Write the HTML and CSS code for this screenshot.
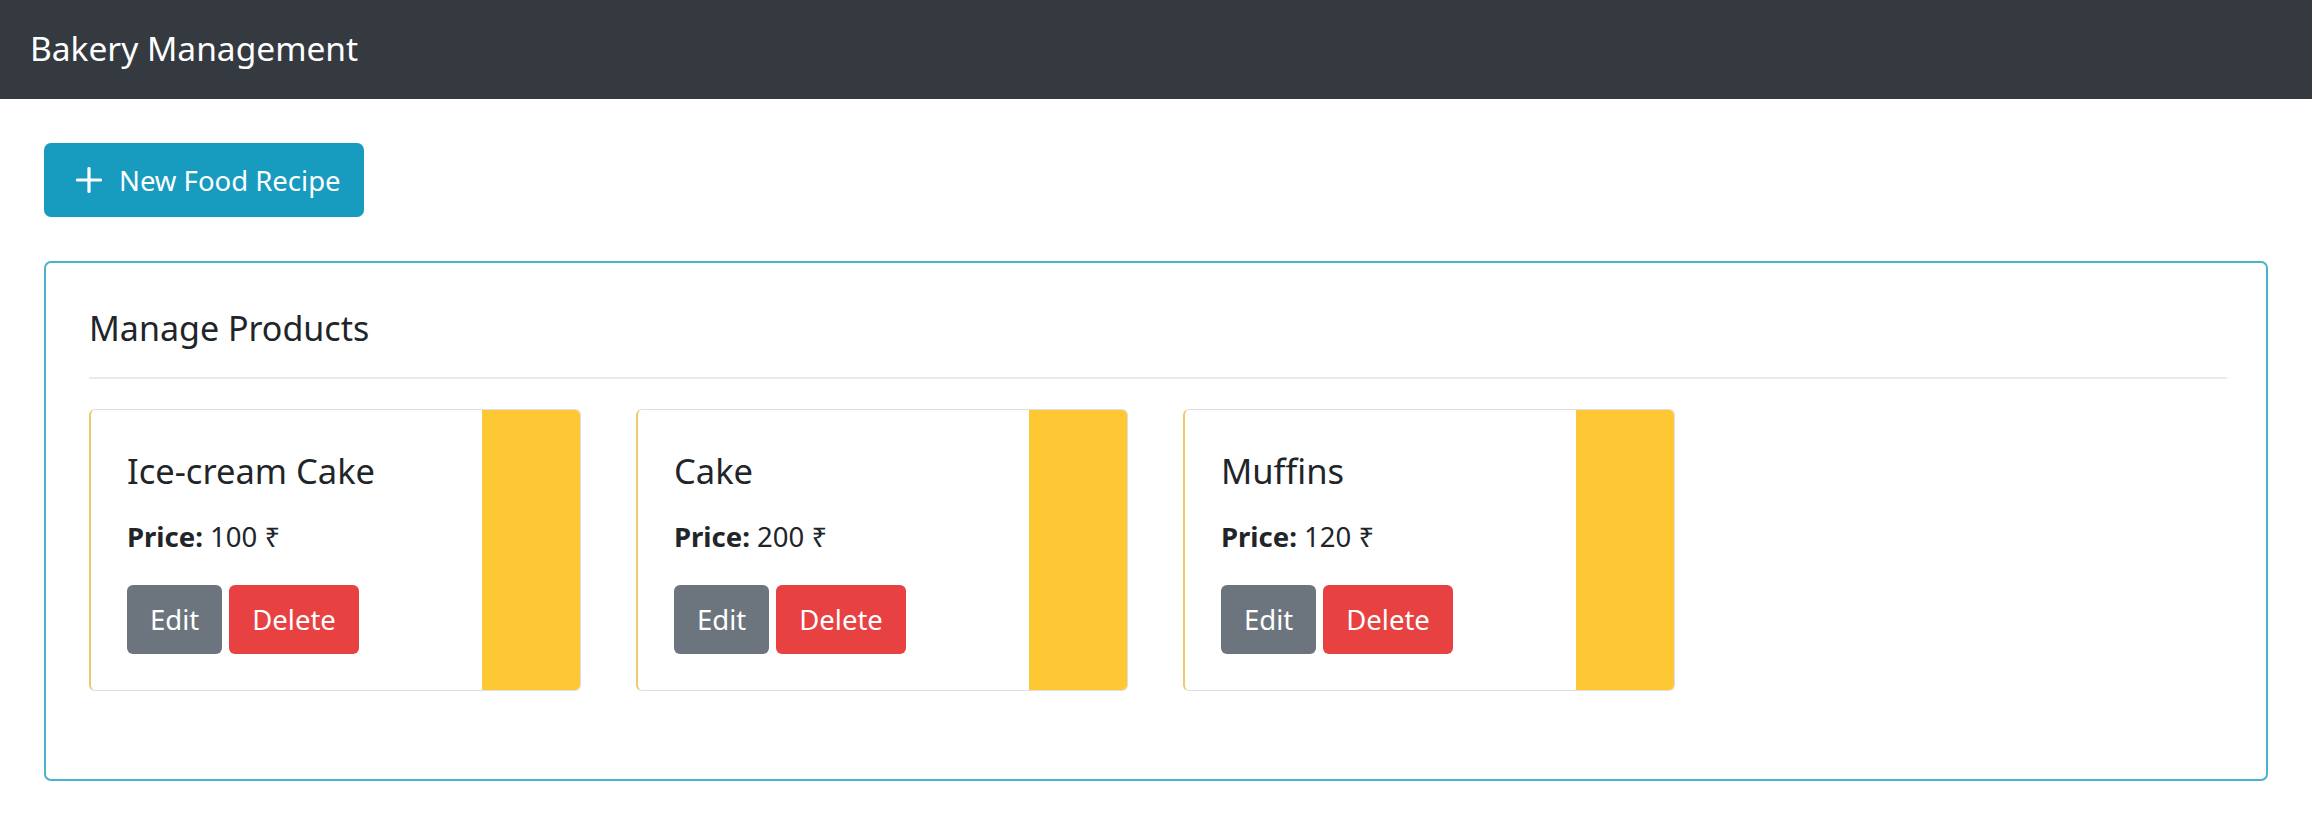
FILE: index.html
```html
<!DOCTYPE html>
<html lang="en">
<head>
<meta charset="utf-8">
<title>Bakery Management</title>
<link rel="stylesheet" href="styles.css">
</head>
<body>
<nav class="navbar">
  <span class="brand">Bakery Management</span>
</nav>
<main class="main">
  <button class="btn btn-new">
    <svg class="plus" viewBox="0 0 26 26" width="26" height="26" aria-hidden="true"><path d="M13 1.5v23M1.5 13h23" stroke="#fff" stroke-width="3.2" stroke-linecap="round" fill="none"/></svg>
    <span>New Food Recipe</span>
  </button>
  <section class="panel">
    <h2 class="panel-title">Manage Products</h2>
    <hr class="divider">
    <div class="cards">
      <div class="card">
        <div class="card-body">
          <h3 class="card-title">Ice-cream Cake</h3>
          <p class="price"><b>Price:</b> 100 ₹</p>
          <div class="actions">
            <button class="btn btn-edit">Edit</button>
            <button class="btn btn-delete">Delete</button>
          </div>
        </div>
        <div class="strip"></div>
      </div>
      <div class="card">
        <div class="card-body">
          <h3 class="card-title">Cake</h3>
          <p class="price"><b>Price:</b> 200 ₹</p>
          <div class="actions">
            <button class="btn btn-edit">Edit</button>
            <button class="btn btn-delete">Delete</button>
          </div>
        </div>
        <div class="strip"></div>
      </div>
      <div class="card">
        <div class="card-body">
          <h3 class="card-title">Muffins</h3>
          <p class="price"><b>Price:</b> 120 ₹</p>
          <div class="actions">
            <button class="btn btn-edit">Edit</button>
            <button class="btn btn-delete">Delete</button>
          </div>
        </div>
        <div class="strip"></div>
      </div>
    </div>
  </section>
</main>
</body>
</html>
```

FILE: styles.css
```css
* { box-sizing: border-box; }

body {
  margin: 0;
  background: #ffffff;
  color: #212529;
  font-family: "Noto Sans", "Open Sans", "DejaVu Sans", sans-serif;
}

.navbar {
  height: 99px;
  background: #343a40;
  display: flex;
  align-items: center;
  padding-left: 30px;
}

.brand {
  color: #ffffff;
  font-size: 33.5px;
  line-height: 1.2;
  padding-bottom: 2px;
}

.main {
  padding: 44px 44px 0 44px;
}

.btn {
  border: none;
  font-family: inherit;
  color: #ffffff;
  cursor: pointer;
  display: inline-flex;
  align-items: center;
  justify-content: center;
  white-space: nowrap;
}

.btn-new {
  height: 74px;
  padding: 0 23px 0 32px;
  gap: 17px;
  background: #179bbf;
  border-radius: 7px;
  font-size: 27.5px;
}

.plus { flex: none; }

.panel {
  margin-top: 44px;
  border: 2px solid #49b3cb;
  border-radius: 7px;
  padding: 45px 39px 88px 43px;
}

.panel-title {
  margin: 0;
  font-size: 34px;
  font-weight: 400;
  line-height: 1.2;
}

.divider {
  margin: 28px 0 30px;
  border: none;
  border-top: 2px solid #ebebeb;
}

.cards {
  display: flex;
  gap: 55px;
}

.card {
  width: 492px;
  height: 282px;
  display: flex;
  border: 1px solid #dedede;
  border-left: 2px solid #eccb6c;
  border-radius: 6px;
  overflow: hidden;
}

.card-body {
  flex: 1;
  padding: 40px 20px 0 36px;
}

.strip {
  width: 98px;
  background: #fec834;
}

.card-title {
  margin: 0;
  font-size: 34.5px;
  font-weight: 400;
  line-height: 1.2;
}

.price {
  margin: 25px 0 0;
  font-size: 27.5px;
  line-height: 1.5;
}

.price b { font-weight: 700; }

.actions {
  margin-top: 28px;
  display: flex;
  gap: 7px;
}

.btn-edit, .btn-delete {
  height: 69px;
  padding: 0 23px;
  font-size: 27.5px;
  border-radius: 6px;
}

.btn-edit { background: #6c757d; }
.btn-delete { background: #e84142; }
```
